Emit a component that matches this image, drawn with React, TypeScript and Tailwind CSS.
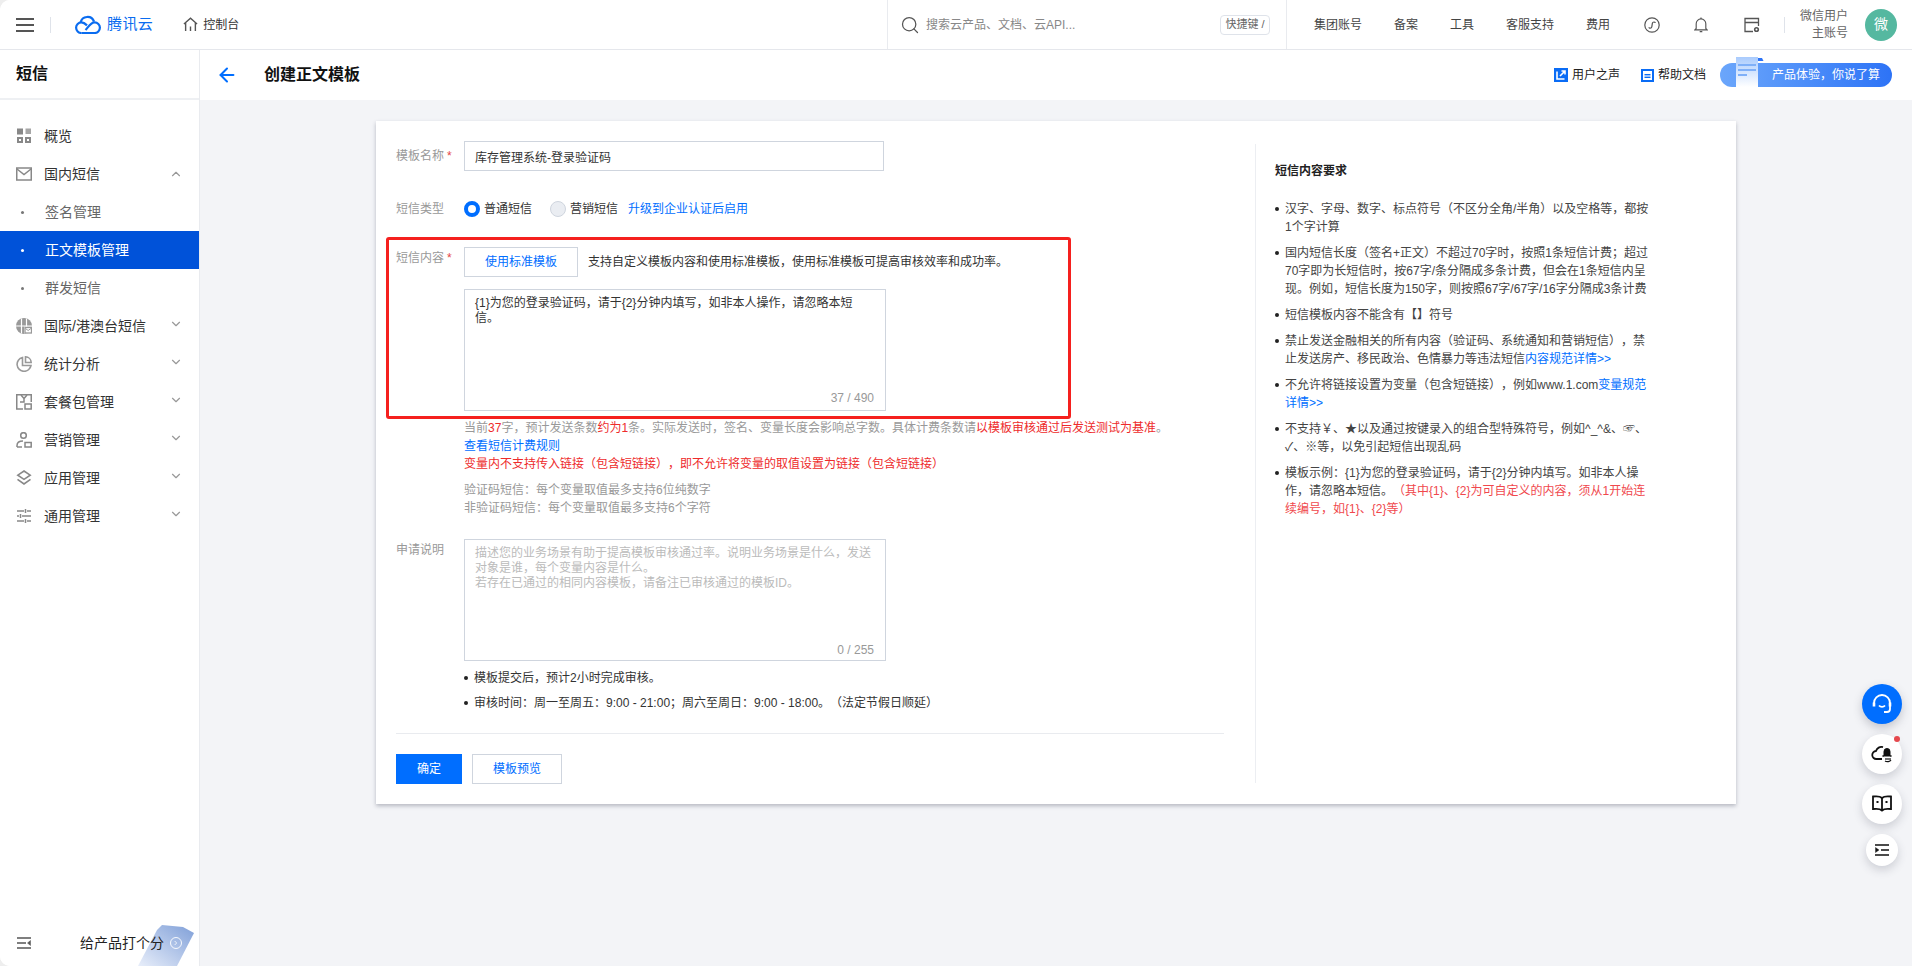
import type { ReactNode } from 'react';
import { ArrowLeft, ChevronDown, ChevronUp, Search } from 'lucide-react';

const SidebarIcons: Record<string, ReactNode> = {
  overview: (
    <svg viewBox="0 0 16 16" className="w-4 h-4" fill="#888">
      <rect x="1" y="0.5" width="6" height="6" />
      <rect x="9.5" y="0.5" width="5.5" height="5.5" fillOpacity="0.75" />
      <rect x="1" y="9" width="6" height="6" />
      <rect x="9" y="9" width="6" height="6" />
      <rect x="3" y="11" width="2" height="2" fill="#fff" />
      <rect x="11" y="11" width="2" height="2" fill="#fff" />
    </svg>
  ),
  mail: (
    <svg viewBox="0 0 16 16" className="w-4 h-4" fill="none" stroke="#888" strokeWidth="1.5">
      <rect x="0.75" y="2" width="14.5" height="12" />
      <path d="M1 3l7 5.5L15 3" />
    </svg>
  ),
  globe: (
    <svg viewBox="0 0 16 16" className="w-4 h-4">
      <circle cx="8" cy="8" r="8" fill="#999" />
      <path d="M0 8h16M5.5 0.5v15M10.5 0.5v15" stroke="#fff" strokeWidth="1.2" fill="none" />
      <rect x="8" y="8.5" width="8" height="7" fill="#fff" />
      <rect x="9" y="9.5" width="6.5" height="5.5" fill="none" stroke="#999" strokeWidth="1.3" />
      <path d="M9.5 10.5l2.7 2 2.7-2" fill="none" stroke="#999" strokeWidth="1" />
    </svg>
  ),
  pie: (
    <svg viewBox="0 0 16 16" className="w-4 h-4" fill="none" stroke="#999" strokeWidth="1.6">
      <path d="M6.5 1.5A7 7 0 1 0 15 9.5H6.5z" strokeLinejoin="miter" />
      <path d="M9.5 0.8A6 6 0 0 1 15.2 6.5H9.5z" />
    </svg>
  ),
  pack: (
    <svg viewBox="0 0 16 16" className="w-4 h-4" fill="none" stroke="#888" strokeWidth="1.5">
      <path d="M7 15H0.75V0.75h14.5V8" />
      <path d="M5 1l3 3.5L11 1M8 4.5V8H4" />
      <rect x="9" y="10" width="6.2" height="5" />
    </svg>
  ),
  user: (
    <svg viewBox="0 0 16 16" className="w-4 h-4" fill="none" stroke="#888" strokeWidth="1.5">
      <circle cx="7.5" cy="3.5" r="2.8" />
      <path d="M1 15v-1.5C1 10.5 3.5 9 7 9" />
      <path d="M1 15h5" />
      <rect x="9" y="10.5" width="6.2" height="4.5" />
    </svg>
  ),
  layers: (
    <svg viewBox="0 0 16 16" className="w-4 h-4" fill="none" stroke="#888" strokeWidth="1.6">
      <path d="M8 1l6.2 4.2L8 9.4 1.8 5.2z" />
      <path d="M1.5 9.4L8 14l6.5-4.6" />
    </svg>
  ),
  sliders: (
    <svg viewBox="0 0 16 16" className="w-4 h-4" fill="none" stroke="#888" strokeWidth="1.5">
      <path d="M1 3h7M11 3h4M1 8h2M6 8h9M1 13h7M11 13h4" />
      <path d="M9.5 1v4M4.5 6v4M9.5 11v4" />
    </svg>
  ),
};

const navItems = [
  { label: '概览', icon: 'overview' },
  { label: '国内短信', icon: 'mail', open: true },
  { label: '签名管理', sub: true },
  { label: '正文模板管理', sub: true, active: true },
  { label: '群发短信', sub: true },
  { label: '国际/港澳台短信', icon: 'globe', arrow: true },
  { label: '统计分析', icon: 'pie', arrow: true },
  { label: '套餐包管理', icon: 'pack', arrow: true },
  { label: '营销管理', icon: 'user', arrow: true },
  { label: '应用管理', icon: 'layers', arrow: true },
  { label: '通用管理', icon: 'sliders', arrow: true },
];

function TopBar() {
  return (
    <header className="flex items-center h-[50px] border-b border-[#e5e7ec] bg-white shrink-0">
      <div className="w-[887px] flex items-center shrink-0">
        {/* Hamburger */}
        <div className="ml-4 w-[18px] flex flex-col gap-[4px]">
          <span className="h-[2px] bg-[#555]" />
          <span className="h-[2px] bg-[#555]" />
          <span className="h-[2px] bg-[#555]" />
        </div>
        <span className="ml-4 w-px h-[16px] bg-[#dfe3ea]" />
        {/* Logo */}
        <svg viewBox="0 0 26 19" className="ml-6 w-[26px] h-[19px]" fill="none" stroke="#0a6cf0" strokeWidth="2.2">
          <path d="M6.4 18H19.6A5.3 5.3 0 1 0 19.6 7.4C15.5 7.4 13 12.5 10.5 15" />
          <path d="M6.4 18A5.3 5.3 0 1 1 6.4 7.4C8.5 7.4 10.2 8.6 12 10.4" />
          <path d="M5.6 7.5A7 7 0 0 1 19 6.5" />
        </svg>
        <span className="ml-[6px] text-[15px] tracking-[0.4px] text-[#0a6cf0]">腾讯云</span>
        <svg viewBox="0 0 16 16" className="ml-[30px] w-[15px] h-[15px]" fill="none" stroke="#555" strokeWidth="1.5">
          <path d="M1 7.5L8 1.2l7 6.3M2.8 6.5V15M13.2 6.5V15M8 10v5" />
        </svg>
        <span className="ml-[5px] text-xs text-[#333]">控制台</span>
      </div>

      <div className="w-[400px] h-full flex items-center border-x border-[#e9ebef] pl-3 pr-4 shrink-0">
        <Search className="w-5 h-5 text-[#555]" strokeWidth={1.5} />
        <span className="ml-[6px] text-xs text-[#888]">搜索云产品、文档、云API...</span>
        <span className="ml-auto w-[50px] h-5 flex items-center justify-center border border-[#dfe3ea] rounded-sm text-[11px] text-[#666]">
          快捷键 /
        </span>
      </div>

      <div className="flex items-center pl-[27px] shrink-0">
        <div className="flex items-center gap-[32px] text-xs text-[#444]">
          <span>集团账号</span>
          <span>备案</span>
          <span>工具</span>
          <span>客服支持</span>
          <span>费用</span>
        </div>
        <svg viewBox="0 0 16 16" className="ml-[34px] w-4 h-4" fill="none" stroke="#555" strokeWidth="1.2">
          <circle cx="8" cy="8" r="7.2" />
          <path d="M5 10.2c0 1.4 2.4 1.4 2.8-.4l.6-3.6c.3-1.6 2.8-1.6 2.8-.1" />
        </svg>
        <svg viewBox="0 0 16 18" className="ml-[34px] w-[14px] h-4" fill="none" stroke="#555" strokeWidth="1.3">
          <path d="M2.5 13V7.5a5.5 5.5 0 0 1 11 0V13l1.5 1.5H1z" />
          <path d="M6.5 16.5h3M8 0.5v1.5" />
        </svg>
        <svg viewBox="0 0 16 16" className="ml-[36px] w-4 h-4" fill="none" stroke="#555" strokeWidth="1.3">
          <path d="M9 14.5H1V1.5h13.5V9M1 5.5h13.5" />
          <circle cx="12.5" cy="12.5" r="1.8" strokeWidth="1.6" />
        </svg>
        <span className="ml-[24px] w-px h-4 bg-[#dfe3ea]" />
        <div className="ml-[15px] w-[48px] flex flex-col items-end text-xs leading-[17px] text-[#666]">
          <span>微信用户</span>
          <span>主账号</span>
        </div>
        <div className="ml-[17px] w-8 h-8 rounded-full bg-[#55b8a0] text-white text-[14px] flex items-center justify-center">
          微
        </div>
      </div>
    </header>
  );
}

function Sidebar() {
  return (
    <aside className="w-[200px] shrink-0 flex flex-col bg-white border-r border-[#e9ebef]">
      <div className="h-[50px] shrink-0 flex items-center pl-4 border-b-2 border-[#eef0f3]">
        <span className="text-base font-bold text-[#111]">短信</span>
      </div>
      <nav className="pt-[17px]">
        {navItems.map((item) => (
          <div
            key={item.label}
            className={`h-[38px] flex items-center text-sm ${
              item.active ? 'bg-[#0052d9] text-white' : item.sub ? 'text-[#666]' : 'text-[#333]'
            }`}
          >
            {item.sub ? (
              <span className={`ml-[21px] w-[3px] h-[3px] rounded-full ${item.active ? 'bg-white' : 'bg-[#777]'}`} />
            ) : (
              <span className="ml-4 w-4 h-4 flex">{SidebarIcons[item.icon as string]}</span>
            )}
            <span className={item.sub ? 'ml-[21px]' : 'ml-3'}>{item.label}</span>
            {item.open && <ChevronUp className="ml-auto mr-[16px] w-[14px] h-[14px] text-[#999]" />}
            {item.arrow && <ChevronDown className="ml-auto mr-[16px] w-[14px] h-[14px] text-[#999] -mt-1" />}
          </div>
        ))}
      </nav>
      <div className="relative mt-auto h-[46px] flex items-center overflow-hidden">
        {/* Folder drawing behind the rating text */}
        <svg viewBox="0 0 70 46" className="absolute left-[125px] top-0 w-[70px] h-[46px]">
          <defs>
            <linearGradient id="folder" x1="0" y1="1" x2="1" y2="0">
              <stop offset="0" stopColor="#e8eefa" />
              <stop offset="1" stopColor="#7f9fd8" />
            </linearGradient>
          </defs>
          <path d="M13 46L32 10 37 5l21 2 11 6-17 33z" fill="url(#folder)" />
        </svg>
        <svg viewBox="0 0 14 12" className="relative ml-[17px] w-[14px] h-[12px]" fill="none" stroke="#555" strokeWidth="1.5">
          <path d="M0 1h14M0 6h9M0 11h14" />
          <path d="M13.5 3.5L10.5 6l3 2.5z" fill="#555" strokeWidth="0.5" />
        </svg>
        <span className="relative ml-[49px] text-sm text-[#222] whitespace-nowrap">给产品打个分</span>
        <span className="relative ml-[6px] w-[12px] h-[12px] rounded-full border border-white/90 flex items-center justify-center">
          <svg viewBox="0 0 6 8" className="w-[4px] h-[6px]" fill="none" stroke="#fff" strokeWidth="1.2">
            <path d="M1 1l3 3-3 3" />
          </svg>
        </span>
      </div>
    </aside>
  );
}

function SubHeader() {
  return (
    <div className="h-[50px] shrink-0 bg-white flex items-center pl-4 pr-5">
      <ArrowLeft className="w-[22px] h-[22px] text-[#006eff]" strokeWidth={2.2} />
      <h1 className="ml-[26px] text-base font-bold text-[#111]">创建正文模板</h1>
      <div className="ml-auto flex items-center text-xs text-[#222]">
        <svg viewBox="0 0 14 14" className="w-[14px] h-[14px]">
          <rect width="14" height="14" fill="#0a6cf5" />
          <path d="M3 3.5V11h7.5M6 8l5-5M7.5 3H11v3.5" fill="none" stroke="#fff" strokeWidth="1.6" />
        </svg>
        <span className="ml-1">用户之声</span>
        <svg viewBox="0 0 13 13" className="ml-[21px] w-[13px] h-[13px]">
          <rect width="13" height="13" fill="#0a6cf5" />
          <rect x="2" y="2" width="9" height="9" fill="#fff" />
          <rect x="3.5" y="5" width="6" height="1.4" fill="#0a6cf5" />
          <rect x="3.5" y="7.6" width="6" height="1.4" fill="#0a6cf5" />
        </svg>
        <span className="ml-1">帮助文档</span>
        <div className="relative ml-[14px] w-[172px] h-6 rounded-full bg-gradient-to-r from-[#6ba6fb] to-[#2d73f6] text-white flex items-center pl-[52px]">
          <svg viewBox="0 0 30 30" className="absolute left-[14px] -top-[6px] w-[30px] h-[30px]">
            <defs>
              <linearGradient id="doc" x1="0" y1="0" x2="0" y2="1">
                <stop offset="0" stopColor="#a9cbfd" />
                <stop offset="1" stopColor="#ffffff" />
              </linearGradient>
            </defs>
            <path d="M24 1h4l1.5 3H24z" fill="#2d73f6" />
            <path d="M2 0h22v30H2z" fill="url(#doc)" />
            <rect x="4" y="7" width="18" height="2" fill="#7fb0f8" />
            <rect x="4" y="12" width="18" height="2" fill="#7fb0f8" />
            <rect x="4" y="17" width="9" height="2" fill="#7fb0f8" />
          </svg>
          产品体验，你说了算
        </div>
      </div>
    </div>
  );
}

function FormLabel({ text, required }: { text: string; required?: boolean }) {
  return (
    <div className="w-[68px] shrink-0 text-xs text-[#999]">
      {text}
      {required && <span className="ml-[3px] text-[#e54545]">*</span>}
    </div>
  );
}

function Dot() {
  return <span className="shrink-0 w-1 h-1 rounded-full bg-[#222] mt-[7px]" />;
}

const Red = ({ children }: { children: ReactNode }) => <span className="text-[#ee2b2b]">{children}</span>;
const Blue = ({ children }: { children: ReactNode }) => <span className="text-[#006eff]">{children}</span>;

const requirements: ReactNode[] = [
  '汉字、字母、数字、标点符号（不区分全角/半角）以及空格等，都按1个字计算',
  '国内短信长度（签名+正文）不超过70字时，按照1条短信计费；超过70字即为长短信时，按67字/条分隔成多条计费，但会在1条短信内呈现。例如，短信长度为150字，则按照67字/67字/16字分隔成3条计费',
  '短信模板内容不能含有【】符号',
  <>
    禁止发送金融相关的所有内容（验证码、系统通知和营销短信），禁止发送房产、移民政治、色情暴力等违法短信
    <Blue>内容规范详情&gt;&gt;</Blue>
  </>,
  <>
    不允许将链接设置为变量（包含短链接），例如www.1.com<Blue>变量规范详情&gt;&gt;</Blue>
  </>,
  '不支持￥、★以及通过按键录入的组合型特殊符号，例如^_^&、☞、✓、※等，以免引起短信出现乱码',
  <>
    模板示例：{'{1}'}为您的登录验证码，请于{'{2}'}分钟内填写。如非本人操作，请忽略本短信。
    <span className="text-[#f0484d]">（其中{'{1}'}、{'{2}'}为可自定义的内容，须从1开始连续编号，如{'{1}'}、{'{2}'}等）</span>
  </>,
];

function FormCard() {
  return (
    <div className="ml-[176px] mt-[21px] w-[1360px] h-[683px] bg-white shadow-[0_2px_4px_rgba(54,58,80,0.32)] flex">
      <div className="w-[848px] pl-5 pt-5 shrink-0">
        <div className="flex items-center">
          <FormLabel text="模板名称" required />
          <input
            readOnly
            value="库存管理系统-登录验证码"
            className="w-[420px] h-[30px] border border-[#cfd5de] px-[10px] text-xs text-[#333] outline-none"
          />
        </div>

        <div className="flex items-center mt-[30px] h-4 text-xs text-[#333]">
          <FormLabel text="短信类型" />
          <span className="w-4 h-4 rounded-full border-[4px] border-[#006eff] bg-white" />
          <span className="ml-1">普通短信</span>
          <span className="ml-[18px] w-4 h-4 rounded-full border border-[#cfd5de] bg-[#eaedf2]" />
          <span className="ml-1">营销短信</span>
          <span className="ml-[10px] text-[#006eff]">升级到企业认证后启用</span>
        </div>

        <div className="relative mt-[30px]">
          <div className="flex">
            <div className="pt-[3px]">
              <FormLabel text="短信内容" required />
            </div>
            <div>
              <div className="flex items-center">
                <button className="w-[114px] h-[30px] border border-[#cfd5de] text-xs text-[#006eff]">使用标准模板</button>
                <span className="ml-[10px] text-xs text-[#333]">
                  支持自定义模板内容和使用标准模板，使用标准模板可提高审核效率和成功率。
                </span>
              </div>
              <div className="relative mt-3 w-[422px] h-[122px]">
                <textarea
                  readOnly
                  value="{1}为您的登录验证码，请于{2}分钟内填写，如非本人操作，请忽略本短信。"
                  className="block w-full h-full resize-none border border-[#cfd5de] px-[10px] py-[6px] text-xs leading-[15px] text-[#333] outline-none"
                />
                <span className="absolute right-3 bottom-[5px] text-xs text-[#999]">37 / 490</span>
              </div>
            </div>
          </div>
          {/* Red annotation box drawn over the screenshot */}
          <div className="absolute -left-[10px] -top-[10px] w-[685px] h-[182px] border-[3px] border-[#f5201e] rounded-[3px] pointer-events-none" />
        </div>

        <div className="ml-[68px] mt-2 text-xs leading-[18px] text-[#999] whitespace-nowrap">
          <p>
            当前<Red>37</Red>字，预计发送条数<Red>约为1</Red>条。实际发送时，签名、变量长度会影响总字数。具体计费条数请
            <Red>以模板审核通过后发送测试为基准</Red>。
          </p>
          <p className="text-[#006eff]">查看短信计费规则</p>
          <p className="text-[#ee2b2b]">变量内不支持传入链接（包含短链接），即不允许将变量的取值设置为链接（包含短链接）</p>
          <p className="mt-2">验证码短信：每个变量取值最多支持6位纯数字</p>
          <p>非验证码短信：每个变量取值最多支持6个字符</p>
        </div>

        <div className="flex mt-[22px]">
          <div className="pt-[3px]">
            <FormLabel text="申请说明" />
          </div>
          <div className="relative w-[422px] h-[122px]">
            <textarea
              readOnly
              placeholder={'描述您的业务场景有助于提高模板审核通过率。说明业务场景是什么，发送对象是谁，每个变量内容是什么。\n若存在已通过的相同内容模板，请备注已审核通过的模板ID。'}
              className="block w-full h-full resize-none border border-[#cfd5de] px-[10px] py-[6px] text-xs leading-[15px] outline-none placeholder:text-[#bbb]"
            />
            <span className="absolute right-3 bottom-[3px] text-xs text-[#999]">0 / 255</span>
          </div>
        </div>

        <div className="ml-[68px] mt-2 text-xs leading-[18px] text-[#333]">
          <div className="flex gap-[6px]">
            <Dot />
            <span>模板提交后，预计2小时完成审核。</span>
          </div>
          <div className="flex gap-[6px] mt-[7px]">
            <Dot />
            <span>审核时间：周一至周五：9:00 - 21:00；周六至周日：9:00 - 18:00。（法定节假日顺延）</span>
          </div>
        </div>

        <div className="mt-[21px] h-px bg-[#e9ebef]" />

        <div className="flex mt-5 text-xs">
          <button className="w-[66px] h-[30px] bg-[#006eff] text-white">确定</button>
          <button className="ml-[10px] w-[90px] h-[30px] border border-[#cfd5de] text-[#006eff]">模板预览</button>
        </div>
      </div>

      <div className="ml-[31px] mt-[23px] mb-[21px] border-l border-[#eceef2] pl-[19px] pt-[18px] w-[400px]">
        <h2 className="text-xs font-bold leading-[18px] text-[#222]">短信内容要求</h2>
        <ul className="mt-[20px] flex flex-col gap-2 w-[376px] text-xs leading-[18px] text-[#444]">
          {requirements.map((text, i) => (
            <li key={i} className="flex gap-[6px]">
              <Dot />
              <span>{text}</span>
            </li>
          ))}
        </ul>
      </div>
    </div>
  );
}

function FloatingButtons() {
  return (
    <div className="absolute right-[10px] top-[684px] flex flex-col items-center gap-[10px]">
      <div className="w-10 h-10 rounded-full bg-[#006eff] shadow-[0_4px_10px_rgba(54,58,80,0.25)] flex items-center justify-center">
        <svg viewBox="0 0 22 22" className="w-[22px] h-[22px]" fill="none" stroke="#fff" strokeWidth="1.8">
          <path d="M3 12V10a8 8 0 0 1 16 0v6c0 2-1 3-3 3h-3" />
          <path d="M3 9.5v4M19 9.5v4" strokeWidth="2.6" />
          <path d="M8 12.5c1.5 1.8 4.5 1.8 6 0" />
        </svg>
      </div>
      <div className="relative w-10 h-10 rounded-full bg-white shadow-[0_4px_10px_rgba(54,58,80,0.2)] flex items-center justify-center">
        <span className="absolute right-[2px] top-[2px] w-[6px] h-[6px] rounded-full bg-[#e5484d]" />
        <svg viewBox="0 0 22 20" className="w-[22px] h-5" fill="none" stroke="#111" strokeWidth="1.8">
          <path d="M11 15H5.5a4 4 0 0 1-.5-8 5.5 5.5 0 0 1 7-3.8" />
          <path d="M13 12V7.5a3 3 0 0 1 6 0V12h1.5H11.5z" fill="#111" strokeWidth="1" />
          <path d="M14 15h6" strokeWidth="1.2" />
          <path d="M14 17c2 1.2 5 .6 6-1" strokeWidth="1.2" />
        </svg>
      </div>
      <div className="w-10 h-10 rounded-full bg-white shadow-[0_4px_10px_rgba(54,58,80,0.2)] flex items-center justify-center">
        <svg viewBox="0 0 20 18" className="w-5 h-[18px]" fill="none" stroke="#111" strokeWidth="1.8">
          <path d="M10 3C8.5 1.500 5 1 1 1.500v12.500c4-.5 7.500 0 9 1.500 1.500-1.500 5-2 9-1.500V1.500C15 1 11.500 1.500 10 3z" />
          <path d="M10 3v13" />
          <rect x="4.500" y="6" width="2" height="2" fill="#111" strokeWidth="0" />
          <rect x="13.500" y="6" width="2" height="2" fill="#111" strokeWidth="0" />
        </svg>
      </div>
      <div className="w-8 h-8 rounded-full bg-white shadow-[0_4px_10px_rgba(54,58,80,0.2)] flex items-center justify-center">
        <svg viewBox="0 0 14 12" className="w-[14px] h-3" fill="none" stroke="#111" strokeWidth="1.4">
          <path d="M0 1h14M6 6h8M0 11h14" />
          <path d="M0.500 3.500L4 6 0.500 8.500z" fill="#111" strokeWidth="0.4" />
        </svg>
      </div>
    </div>
  );
}

export default function App() {
  return (
    <div className="h-screen w-full bg-[#eeeeee] font-['Liberation_Sans','Noto_Sans_CJK_SC',sans-serif] [text-spacing-trim:space-all]">
      <div className="relative h-full overflow-hidden rounded-l-[10px] bg-white flex flex-col">
        <TopBar />
        <div className="flex flex-1 min-h-0">
          <Sidebar />
          <main className="flex-1 min-w-0 flex flex-col bg-[#f3f4f7]">
            <SubHeader />
            <FormCard />
          </main>
        </div>
        <FloatingButtons />
      </div>
    </div>
  );
}
